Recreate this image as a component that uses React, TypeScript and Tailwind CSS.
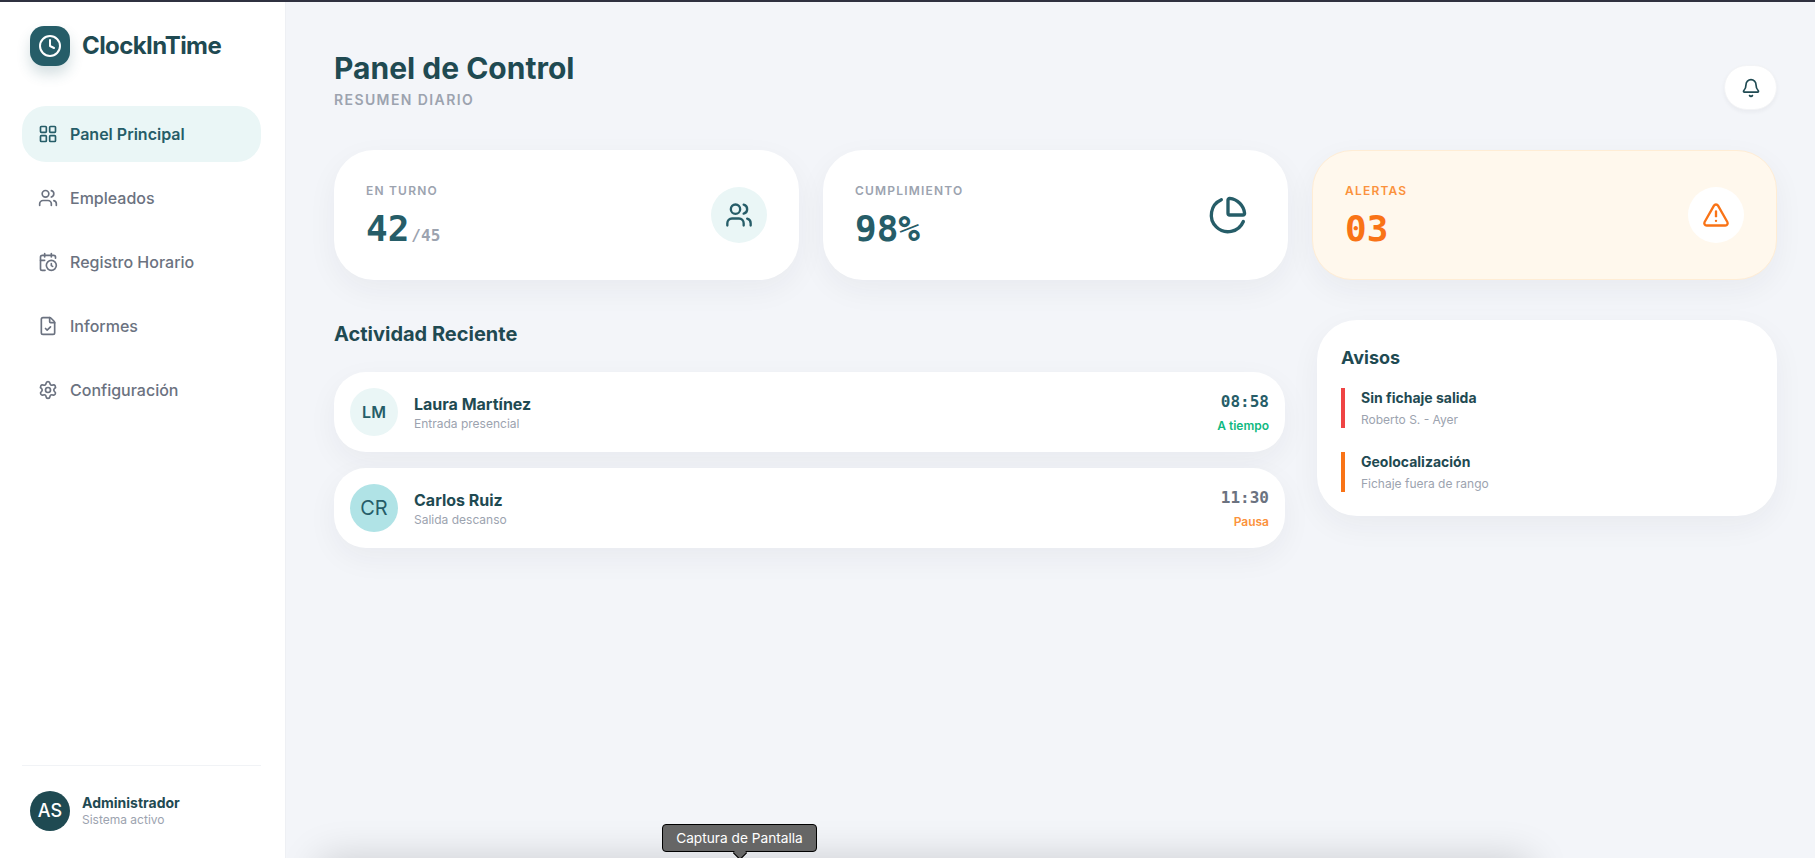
import { Bell, CalendarClock, ChartPie, Clock, FileCheck, LayoutGrid, Settings, TriangleAlert, Users } from 'lucide-react';

const nav = [
  { name: 'Panel Principal', icon: LayoutGrid, active: true },
  { name: 'Empleados', icon: Users },
  { name: 'Registro Horario', icon: CalendarClock },
  { name: 'Informes', icon: FileCheck },
  { name: 'Configuración', icon: Settings },
];

const mono = "font-['DejaVu_Sans_Mono','Liberation_Mono',monospace]";

export default function App() {
  return (
    <div className="flex h-[858px] w-full flex-col overflow-hidden bg-[#f3f5f9] font-['Inter',sans-serif] text-[#1f4a52]">
      <div className="h-0.5 shrink-0 bg-[#2f3140]" />
      <div className="flex min-h-0 flex-1">
        <aside className="flex w-[286px] shrink-0 flex-col border-r border-[#eef0f4] bg-white pr-6 pl-[22px]">
          <div className="mt-6 flex items-center gap-3 px-2">
            <div className="flex h-10 w-10 items-center justify-center rounded-[14px] bg-[#265d68] text-white shadow-[0_8px_14px_rgba(38,93,104,0.2)]">
              <Clock className="h-6 w-6" />
            </div>
            <span className="text-2xl font-bold tracking-[-0.6px]">ClockInTime</span>
          </div>

          <nav className="mt-10 flex flex-col gap-2">
            {nav.map((item) => (
              <a
                key={item.name}
                href="#"
                className={
                  item.active
                    ? 'flex h-14 items-center gap-3 rounded-3xl bg-[#eaf6f6] px-4 font-semibold text-[#265d68]'
                    : 'flex h-14 items-center gap-3 rounded-3xl px-4 font-medium text-[#6b7280]'
                }
              >
                <item.icon className="h-5 w-5" />
                {item.name}
              </a>
            ))}
          </nav>

          <div className="mt-auto mb-[27px] border-t border-[#f1f3f6] pt-[25px]">
            <div className="flex items-center gap-3 px-2">
              <div className="flex h-10 w-10 items-center justify-center rounded-full bg-[#1f4a52] text-lg font-medium text-white">AS</div>
              <div>
                <p className="text-sm leading-[18px] font-bold">Administrador</p>
                <p className="text-xs leading-4 text-[#9ca3af]">Sistema activo</p>
              </div>
            </div>
          </div>
        </aside>

        <main className="relative min-w-0 flex-1 pt-[48px] pr-[38px] pl-[48px]">
          <header className="flex items-start justify-between">
            <div>
              <h1 className="text-3xl leading-9 font-bold">Panel de Control</h1>
              <p className="mt-1 text-sm leading-5 font-semibold tracking-widest text-[#9ca3af]">RESUMEN DIARIO</p>
            </div>
            <button className="mt-[15px] flex h-[45px] w-[53px] items-center justify-center rounded-full border border-[#f3f4f6] bg-white shadow-[0_2px_4px_rgba(31,41,55,0.05)]">
              <Bell className="h-5 w-5" />
            </button>
          </header>

          <section className="mt-10 grid grid-cols-3 gap-6">
            <div className="flex h-[130px] items-center justify-between rounded-[40px] bg-white px-8 shadow-[0_10px_30px_rgba(31,41,55,0.05)]">
              <div className="pt-0.5">
                <p className="text-xs leading-4 font-semibold tracking-widest text-[#9ca3af]">EN TURNO</p>
                <p className={`mt-[10px] text-4xl leading-10 font-bold text-[#265d68] ${mono}`}>
                  42<span className="ml-0.5 text-base font-semibold text-[#9ca3af]">/45</span>
                </p>
              </div>
              <div className="flex h-14 w-14 items-center justify-center rounded-full bg-[#eaf6f6] text-[#265d68]">
                <Users className="h-7 w-7" />
              </div>
            </div>

            <div className="flex h-[130px] items-center justify-between rounded-[40px] bg-white px-8 shadow-[0_10px_30px_rgba(31,41,55,0.05)]">
              <div className="pt-0.5">
                <p className="text-xs leading-4 font-semibold tracking-widest text-[#9ca3af]">CUMPLIMIENTO</p>
                <p className={`mt-[10px] text-4xl leading-10 font-bold text-[#265d68] ${mono}`}>98%</p>
              </div>
              <div className="flex h-14 w-14 items-center justify-center text-[#265d68]">
                <ChartPie className="h-10 w-10" />
              </div>
            </div>

            <div className="flex h-[130px] items-center justify-between rounded-[40px] border border-[#ffedd5] bg-[#fff8ed] px-8 shadow-[0_10px_30px_rgba(31,41,55,0.05)]">
              <div className="pt-0.5">
                <p className="text-xs leading-4 font-semibold tracking-widest text-[#fb923c]">ALERTAS</p>
                <p className={`mt-[10px] text-4xl leading-10 font-bold text-[#f97316] ${mono}`}>03</p>
              </div>
              <div className="flex h-14 w-14 items-center justify-center rounded-full bg-white text-[#f97316]">
                <TriangleAlert className="h-7 w-7" />
              </div>
            </div>
          </section>

          <section className="mt-10 flex items-start gap-8">
            <div className="min-w-0 flex-1">
              <h2 className="text-xl leading-7 font-bold">Actividad Reciente</h2>
              <div className="mt-6 flex flex-col gap-4">
                <div className="flex h-20 items-center gap-4 rounded-[32px] bg-white px-4 shadow-[0_10px_30px_rgba(31,41,55,0.05)]">
                  <div className="flex h-12 w-12 items-center justify-center rounded-full bg-[#eaf6f6] font-semibold text-[#265d68]">LM</div>
                  <div className="flex-1">
                    <p className="leading-6 font-bold">Laura Martínez</p>
                    <p className="text-xs leading-4 text-[#9ca3af]">Entrada presencial</p>
                  </div>
                  <div className="text-right">
                    <p className={`leading-6 font-bold text-[#265d68] ${mono}`}>08:58</p>
                    <p className="mt-1 text-xs leading-4 font-semibold text-[#10b981]">A tiempo</p>
                  </div>
                </div>
                <div className="flex h-20 items-center gap-4 rounded-[32px] bg-white px-4 shadow-[0_10px_30px_rgba(31,41,55,0.05)]">
                  <div className="flex h-12 w-12 items-center justify-center rounded-full bg-[#b0e3e6] text-xl text-[#265d68]">CR</div>
                  <div className="flex-1">
                    <p className="leading-6 font-bold">Carlos Ruiz</p>
                    <p className="text-xs leading-4 text-[#9ca3af]">Salida descanso</p>
                  </div>
                  <div className="text-right">
                    <p className={`leading-6 font-bold text-[#6b7280] ${mono}`}>11:30</p>
                    <p className="mt-1 text-xs leading-4 font-semibold text-[#fb923c]">Pausa</p>
                  </div>
                </div>
              </div>
            </div>

            <div className="w-[460px] rounded-[40px] bg-white p-6 shadow-[0_10px_30px_rgba(31,41,55,0.05)]">
              <h3 className="text-lg leading-7 font-bold">Avisos</h3>
              <div className="mt-4 flex flex-col gap-6">
                <div className="border-l-4 border-[#ef4444] pl-4">
                  <p className="text-sm leading-5 font-bold">Sin fichaje salida</p>
                  <p className="mt-1 text-xs leading-4 text-[#9ca3af]">Roberto S. - Ayer</p>
                </div>
                <div className="border-l-4 border-[#f97316] pl-4">
                  <p className="text-sm leading-5 font-bold">Geolocalización</p>
                  <p className="mt-1 text-xs leading-4 text-[#9ca3af]">Fichaje fuera de rango</p>
                </div>
              </div>
            </div>
          </section>

          {/* dock sits just under the window, only its shadow shows */}
          <div className="absolute top-[858px] left-[34px] h-10 w-[1210px] bg-white shadow-[0_0_40px_rgba(0,0,0,0.18)]" />
          <div className="absolute top-[822px] left-[376px] z-10 flex h-7 w-[155px] items-center justify-center rounded border border-black bg-[#666] text-[13.7px] text-white">
            Captura de Pantalla
            <span className="absolute top-[23px] left-[72px] h-2.5 w-2.5 rotate-45 border-r border-b border-black bg-[#666]" />
          </div>
        </main>
      </div>
    </div>
  );
}
